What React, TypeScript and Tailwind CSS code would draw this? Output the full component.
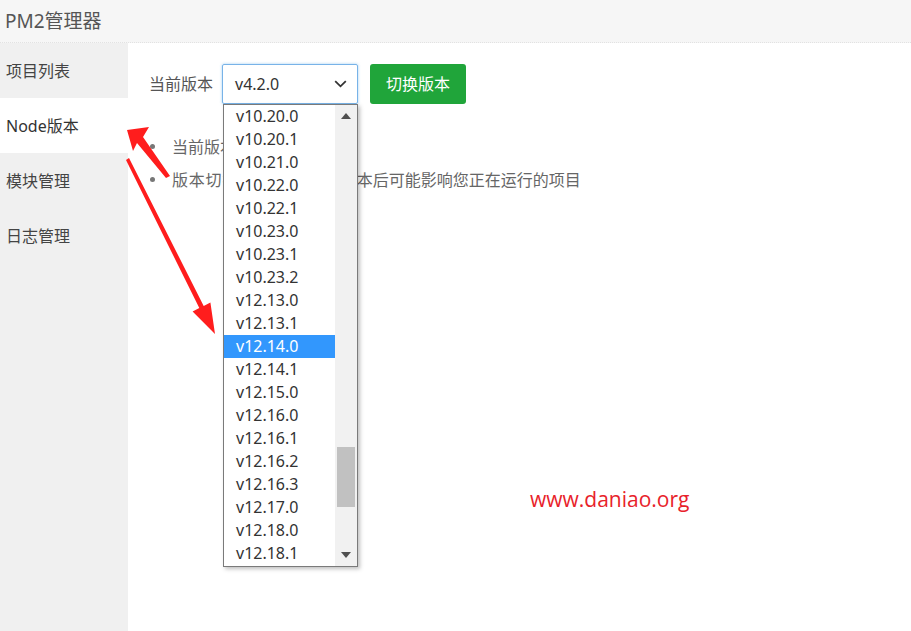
import React from "react";

const versions = [
  "v10.20.0","v10.20.1","v10.21.0","v10.22.0","v10.22.1","v10.23.0","v10.23.1","v10.23.2",
  "v12.13.0","v12.13.1","v12.14.0","v12.14.1","v12.15.0","v12.16.0","v12.16.1","v12.16.2",
  "v12.16.3","v12.17.0","v12.18.0","v12.18.1",
];

const menu = ["项目列表", "Node版本", "模块管理", "日志管理"];

export default function App() {
  return (
    <div
      className="relative w-[911px] h-[631px] overflow-hidden bg-white"
      style={{ fontFamily: '"Noto Sans", "Noto Sans CJK SC", sans-serif' }}
    >
      <div className="h-[43px] bg-[#f6f6f6] border-b border-dotted border-[#e2e2e2] flex items-center pl-[5px] text-[19px] text-[#555]">
        PM2管理器
      </div>
      <div className="flex h-[588px]">
        <div className="w-[128px] bg-[#f0f0f0] flex flex-col">
          {menu.map((m, i) => (
            <div
              key={m}
              className={
                "h-[55px] flex items-center pl-[6px] text-[16px] " +
                (i === 1 ? "bg-white text-[#333]" : "text-[#444]")
              }
            >
              {m}
            </div>
          ))}
        </div>
        <div className="flex-1 pl-[21px] pt-[21px]">
          <div className="flex items-center h-[40px]">
            <span className="text-[16px] text-[#555] w-[73px]">当前版本</span>
            <div className="relative w-[136px] h-[40px]">
              <div className="w-full h-full border border-[#78b3e8] rounded-[2px] shadow-[0_0_3px_rgba(102,175,233,0.6)] flex items-center pl-[12px] pr-[10px] text-[16px] text-[#333]">
                <span className="flex-1">v4.2.0</span>
                <svg width="13" height="8" viewBox="0 0 13 8">
                  <polyline points="1.2,1.2 6.5,6.3 11.8,1.2" fill="none" stroke="#333" strokeWidth="1.8" />
                </svg>
              </div>
              <div className="absolute left-[1px] top-[40px] z-10 w-[135px] h-[463px] bg-white border border-[#7a7a7a] shadow-[2px_2px_4px_rgba(0,0,0,0.25)] flex">
                <div className="w-[111px] flex flex-col">
                  {versions.map((v) => (
                    <div
                      key={v}
                      className={
                        "h-[23px] leading-[23px] pl-[12px] text-[16px] " +
                        (v === "v12.14.0" ? "bg-[#3297fd] text-white" : "text-[#333]")
                      }
                    >
                      {v}
                    </div>
                  ))}
                </div>
                <div className="w-[22px] bg-[#f1f1f1] flex flex-col items-center">
                  <div className="h-[22px] flex items-center justify-center">
                    <svg width="10" height="6" viewBox="0 0 10 6"><polygon points="5,0 10,6 0,6" fill="#505050" /></svg>
                  </div>
                  <div className="h-[320px]" />
                  <div className="w-[18px] h-[60px] bg-[#c1c1c1]" />
                  <div className="flex-1" />
                  <div className="h-[22px] flex items-center justify-center">
                    <svg width="10" height="6" viewBox="0 0 10 6"><polygon points="0,0 10,0 5,6" fill="#505050" /></svg>
                  </div>
                </div>
              </div>
            </div>
            <button className="ml-[12px] w-[96px] h-[40px] rounded-[3px] bg-[#20a53a] text-white text-[16px]">
              切换版本
            </button>
          </div>
          <ul className="mt-[26px] text-[16px] text-[#666]">
            <li className="flex items-center h-[33px]">
              <span className="w-[5px] h-[5px] rounded-full bg-[#777] ml-[1px] mr-[17px]" />
              当前版本：v4.2.0
            </li>
            <li className="flex items-center h-[33px]">
              <span className="w-[5px] h-[5px] rounded-full bg-[#777] ml-[1px] mr-[17px]" />
              <span className="tracking-[0.8px]">版本切换提示：切换新版</span>
              <span>本后可能影响您正在运行的项目</span>
            </li>
          </ul>
        </div>
      </div>

      <svg className="absolute inset-0 pointer-events-none" width="911" height="631" viewBox="0 0 911 631">
        <polygon points="127,130 149,127 143,137 170,176 166,178 137,143 133,151" fill="#ff1d1d" />
        <polygon points="126,160 129,158 203.7,305.9 210.4,302.5 215,334 192.6,311.5 199.3,308.1" fill="#ff1d1d" />
      </svg>
      <div
        className="absolute left-[530px] top-[484px] text-[21px] text-[#e8222a]"
        style={{ fontFamily: '"Open Sans", "Noto Sans", sans-serif' }}
      >
        www.daniao.org
      </div>
    </div>
  );
}
